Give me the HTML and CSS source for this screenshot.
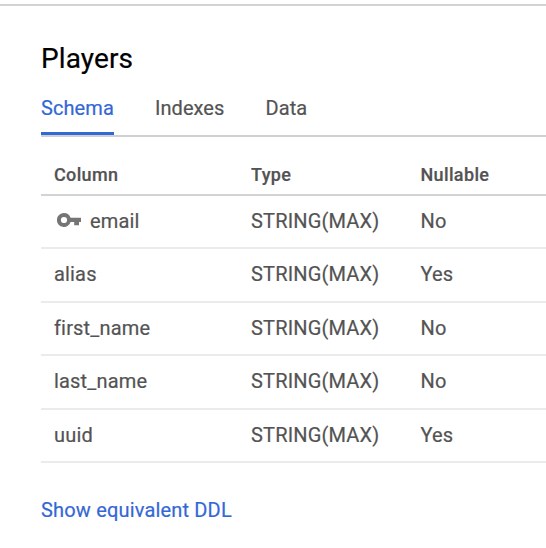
FILE: index.html
```html
<!DOCTYPE html>
<html lang="en">
<head>
<meta charset="utf-8">
<title>Players</title>
<link rel="stylesheet" href="styles.css">
</head>
<body>
<main class="panel">
  <h1 class="title">Players</h1>
  <nav class="tabs">
    <a class="tab tab-active">Schema</a>
    <a class="tab">Indexes</a>
    <a class="tab">Data</a>
  </nav>
  <div class="table">
    <div class="row head"><span>Column</span><span>Type</span><span>Nullable</span></div>
    <div class="row"><span class="key-cell"><svg class="key" viewBox="0 0 24 14"><path fill-rule="evenodd" d="M7 0A7 7 0 0 1 13.6 4.8H24V9H22V12.2H17.2V9H13.6A7 7 0 1 1 7 0zM7 3.9a3.1 3.1 0 1 0 0 6.2a3.1 3.1 0 0 0 0-6.2z"/></svg>email</span><span>STRING(MAX)</span><span>No</span></div>
    <div class="row"><span>alias</span><span>STRING(MAX)</span><span>Yes</span></div>
    <div class="row"><span>first_name</span><span>STRING(MAX)</span><span>No</span></div>
    <div class="row"><span>last_name</span><span>STRING(MAX)</span><span>No</span></div>
    <div class="row"><span>uuid</span><span>STRING(MAX)</span><span>Yes</span></div>
  </div>
  <a class="ddl">Show equivalent DDL</a>
</main>
</body>
</html>
```

FILE: styles.css
```css
* { box-sizing: border-box; }
body {
  margin: 0;
  background: #fff;
  color: #535353;
  font: 20px/24px Roboto, sans-serif;
  letter-spacing: 0.17px;
  -webkit-text-stroke: 0.2px currentColor;
  overflow: hidden;
}
.panel {
  height: 544px;
  margin-top: 4px;
  border-top: 2px solid #d3d3d3;
  padding: 36px 0 0 41px;
}
.title {
  margin: 0;
  color: #000;
  font-size: 28px;
  line-height: 34px;
  font-weight: 400;
  letter-spacing: 0.1px;
}
.tabs {
  display: flex;
  gap: 41px;
  height: 61px;
  border-bottom: 2px solid #d0d0d0;
  letter-spacing: 0.08px;
}
.tab {
  height: 59px;
  padding-top: 20px;
}
.tab-active {
  color: #3367d6;
  border-bottom: 3px solid #3367d6;
}
.table { margin-top: 20px; }
.row {
  display: grid;
  grid-template-columns: 197px 169.5px 1fr;
  align-items: center;
  height: 53.4px;
  padding: 0 0 1.4px 13px;
  border-bottom: 2px solid #ebebeb;
}
.head {
  height: 39px;
  padding-bottom: 2px;
  border-bottom-color: #d3d3d3;
  font-size: 18px;
  font-weight: 500;
  letter-spacing: 0.35px;
}
.key-cell { display: flex; align-items: center; }
.key {
  width: 24px;
  height: 14px;
  margin: 0 8.7px 3px 3.3px;
  fill: #757575;
}
.ddl {
  display: block;
  margin-top: 35px;
  color: #3367d6;
}
```
